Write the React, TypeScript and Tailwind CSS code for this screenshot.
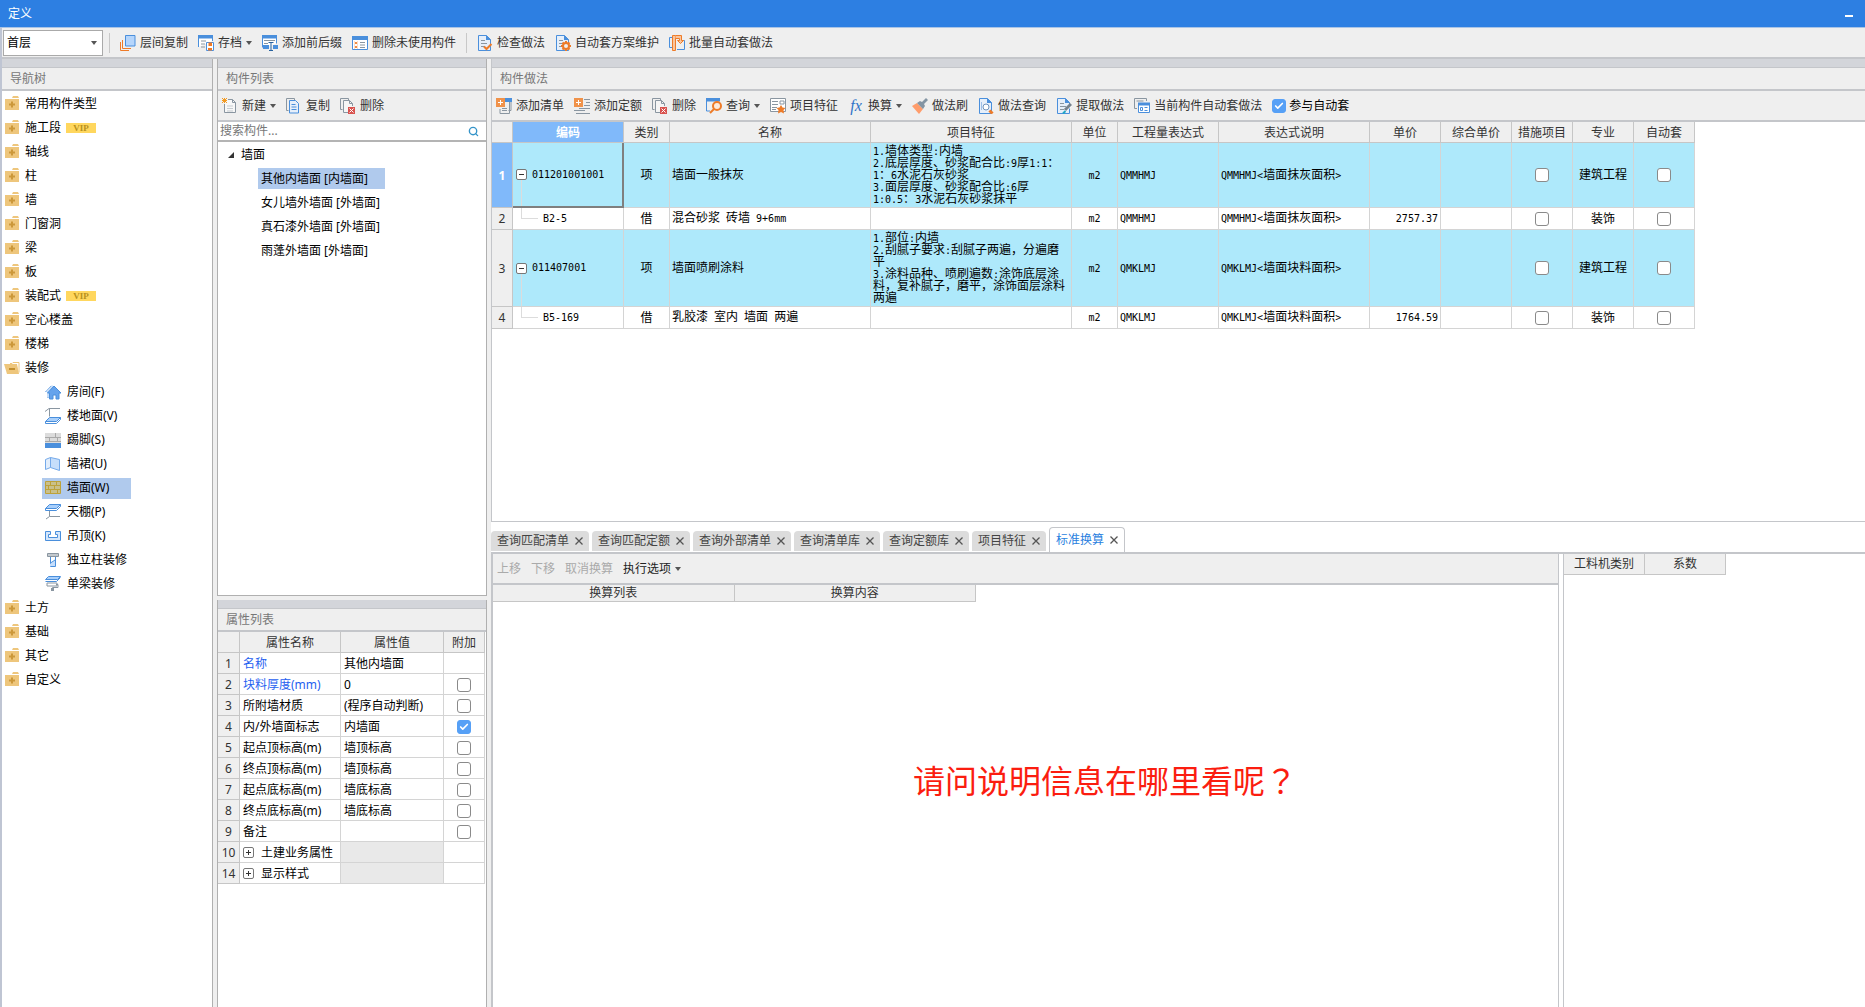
import type { ReactNode } from "react";
import { Check, Search } from "lucide-react";
import clsx from "clsx";

const ORANGE = "#ee7b28";
const BLUE = "#4a8fdc";
const GREY = "#8a96a1";

function Svg({ children }: { children: ReactNode }) {
  return (
    <svg viewBox="0 0 16 16" className="size-4 shrink-0" fill="none" aria-hidden="true">
      {children}
    </svg>
  );
}

const pageWithFold = (
  <>
    <path d="M1.500 .5h8l4 4v11h-12z" fill="#e6effa" stroke={BLUE} />
    <path d="M9 0l5 5H9z" fill={BLUE} />
    <path d="M4 5.500h4M4 8.500h6M4 11.500h4" stroke={GREY} />
  </>
);

const deleteIcon = (
  <>
    <path d="M8.500 2V.5h-8v11h2" stroke={GREY} />
    <path d="M8 14.500H3.500v-12h6l3 3V8" fill="#f5f5f5" stroke={GREY} />
    <path d="M9.500 2.500v3h3" stroke={GREY} />
    <path d="M8 9h7v7H8z" fill="#d9534f" />
    <path d="M9.500 10.500l4 4m0-4l-4 4" stroke="#fff" />
  </>
);

const plusBox = (
  <>
    <path d="M0 0h9v9H0z" fill="#f0924a" />
    <path d="M4.500 2v5M2 4.500h5" stroke="#fff" />
  </>
);

const icons = {
  layerCopy: (
    <Svg>
      <path d="M.5 7v8.500H9" stroke={ORANGE} />
      <path d="M2.500 5v8.500H11" stroke={ORANGE} />
      <path d="M5.500 .5h9.500v10.500H5.500z" fill="#b5d5fb" stroke={BLUE} />
    </Svg>
  ),
  archive: (
    <Svg>
      <path d="M.5 12V.5h14V6" fill="#fff" stroke={BLUE} />
      <path d="M0 0h15v3.500H0z" fill={BLUE} />
      <path d="M3 6h5M3 9h4M3 12h4" stroke={GREY} />
      <path d="M8.500 7.500h7v8h-7z" fill="#fff" stroke={BLUE} />
      <path d="M10.500 7.500h3.500V11h-3.500zM10 13h4v2.500h-4z" fill={ORANGE} />
    </Svg>
  ),
  affix: (
    <Svg>
      <path d="M.5 12.500V.5h14v8" fill="#fff" stroke={BLUE} />
      <path d="M0 0h15v3.500H0z" fill={BLUE} />
      <path d="M2 5.500h11M2 8.500h4" stroke={GREY} />
      <path d="M1 10h6v4H1zM11 10h5v4h-5z" fill={BLUE} />
      <path d="M6.500 7.500h5M9 7.500v8M7 15.500h4" stroke="#28629f" />
    </Svg>
  ),
  unused: (
    <Svg>
      <path d="M.5 1.500h15v13H.5z" fill="#fff" stroke={BLUE} />
      <path d="M0 1h16v4H0z" fill={BLUE} />
      <path d="M2.500 7l3 2m-3 0l3-2m-3 4l3 2m-3 0l3-2" stroke={ORANGE} />
      <path d="M8 7.500h5M8 10h5M8 12.500h5" stroke={GREY} />
    </Svg>
  ),
  check: (
    <Svg>
      {pageWithFold}
      <path d="M7 11.500l2.500 2.500 5-5" stroke={ORANGE} strokeWidth="2" />
    </Svg>
  ),
  scheme: (
    <Svg>
      {pageWithFold}
      <circle cx="11" cy="11" r="3" fill="#efefef" stroke={ORANGE} strokeWidth="2" />
      <path
        d="M11 6v2M11 14v2M6 11h2M14 11h2M7.500 7.500L9 9m4 4l1.500 1.500m0-7L13 9m-4 4l-1.500 1.500"
        stroke={ORANGE}
        strokeWidth="2"
      />
    </Svg>
  ),
  batch: (
    <Svg>
      <path d="M4 2.500H.5v10H4M13 5.500h2.500v9H8" stroke={BLUE} />
      <path d="M3.500 .5h3v15h-3z" fill="#f9c59d" stroke={ORANGE} />
      <path d="M6.500 .5h6v5h2L11.500 8.500 8.500 5.500h2v-2h-4" fill="#f9c59d" stroke={ORANGE} />
    </Svg>
  ),
  create: (
    <Svg>
      <path d="M6 1.500h4.500l3 3v10h-11V6" fill="#f8f8f8" stroke={GREY} />
      <path d="M10.500 1.500v3h3" stroke={GREY} />
      <path d="M5 8h6M5 10.500h6M5 13h6" stroke="#c5cbd0" />
      <path d="M0 0l5 5m0-5L0 5M2.500 0v5M0 2.500h5" stroke="#f39a21" />
    </Svg>
  ),
  copy: (
    <Svg>
      <path d="M2.500 12.500h-2v-12h8v2" stroke={GREY} />
      <path d="M3.500 2.500h6l3 3v9.500h-9z" fill="#e6effa" stroke={BLUE} />
      <path d="M5.500 6.500h4M5.500 9h5M5.500 11.500h5" stroke={BLUE} />
    </Svg>
  ),
  remove: <Svg>{deleteIcon}</Svg>,
  addList: (
    <Svg>
      <path d="M10 .5h5v12h-2.500M4 11v4.500h9.500V4" stroke={GREY} />
      <path d="M9 0h7v4H9z" fill={BLUE} />
      <path d="M6 10.500h5M6 12.500h5" stroke={GREY} />
      {plusBox}
    </Svg>
  ),
  addQuota: (
    <Svg>
      <path d="M10 1.500h6M12 4.500h4M10 7.500h6M5 10.500h11M0 12.500h11M2 15.500h14" stroke={GREY} />
      {plusBox}
    </Svg>
  ),
  query: (
    <Svg>
      <path d="M.5 2v11H4" stroke={BLUE} />
      <path d="M0 0h14v3.500H0z" fill={BLUE} />
      <circle cx="11" cy="8" r="4" fill="#fdeadb" stroke={ORANGE} strokeWidth="2" />
      <path d="M8 11l-4 4" stroke={ORANGE} strokeWidth="2" />
    </Svg>
  ),
  feature: (
    <Svg>
      <path d="M.5 .5h15v13H.5z" fill="#fff" stroke={GREY} />
      <path d="M2 3.500h6M2 6.500h6M2 9.500h5M2 11.500h4M10 3h4v3h-4z" stroke={GREY} />
      <path d="M11 7l1.500 2.500 3 .5-2 2 .5 3.500-3-1.500-3 1.500.5-3.500-2-2 3-.5z" fill={ORANGE} />
    </Svg>
  ),
  convert: (
    <span className="w-4 font-['Liberation_Serif',serif] text-base leading-4 text-[#2f74c8] italic" aria-hidden="true">
      fx
    </span>
  ),
  brush: (
    <Svg>
      <path d="M0 8l5-3 6 6-4 5z" fill="#ff9d6c" />
      <path d="M5 5l3-2 2 1 4-4 2 2-4 4 1 2-2 3z" fill="#8495a4" />
    </Svg>
  ),
  methodQuery: (
    <Svg>
      <path d="M1.500 .5h8l4 4v11h-12z" fill="#e6effa" stroke={BLUE} />
      <path d="M9 0l5 5H9z" fill={BLUE} />
      <circle cx="8" cy="9" r="3" fill="#fff" stroke="#6f93bd" />
      <path d="M3.500 4v8" stroke="#9dbfe8" />
      <path d="M11.500 12.500l3 3" stroke={ORANGE} strokeWidth="3" />
    </Svg>
  ),
  extract: (
    <Svg>
      {pageWithFold}
      <path d="M8 15l1-4 5-5 2 2-5 5z" fill="#fff" />
      <path d="M9 12l6-6" stroke="#76828d" strokeWidth="3" />
      <path d="M7 15.500l2.500-2.500" stroke="#22a7c4" strokeWidth="2" />
    </Svg>
  ),
  current: (
    <Svg>
      <path d="M3 10.500H.5V.5h12V3M2.500 3h7" stroke={GREY} />
      <path d="M4.500 5.500h11v9h-11z" fill="#fff" stroke={BLUE} />
      <path d="M4 4.500h12v3H4z" fill={BLUE} />
      <path d="M6.500 9.500h2v3h-2zM10.500 9.500h3M10.500 12.500h3" stroke={BLUE} />
    </Svg>
  ),
  folder: (
    <Svg>
      <path d="M8 2l1-2h5l1 2zM1 3h14v11H1z" fill="#eec67c" />
      <path d="M8 5.500v6M5 8.500h6" stroke="#cc983a" strokeWidth="2" />
    </Svg>
  ),
  folderOpen: (
    <Svg>
      <path d="M6 3.500h2l1-1h6v10" fill="#fff" stroke="#eec67c" />
      <path d="M0 4h13l2 10H3z" fill="#eec67c" />
      <path d="M5 9h6" stroke="#c28f2e" strokeWidth="2" />
    </Svg>
  ),
  room: (
    <Svg>
      <path d="M.5 8L6 2M3 14V7" stroke={BLUE} />
      <path d="M1 7l6-6 2 2-5 5v5H2V7z" fill="#c4dcf8" />
      <path d="M9 2l7 7h-2v6h-3v-4H8v4H4.500V9H2.500z" fill="#65a3ec" stroke={BLUE} />
    </Svg>
  ),
  floor: (
    <Svg>
      <path d="M0 3.500L4 .5h11M4.500 .5v8" stroke={GREY} />
      <path d="M4.500 9.500h11l-4 4H.5z" fill="#a8cffb" stroke={BLUE} />
      <path d="M.5 13.500v2h11l4-4v-2" stroke={BLUE} />
    </Svg>
  ),
  skirting: (
    <Svg>
      <path d="M0 1h16v10H0z" fill="#dcdcdc" />
      <path d="M0 5.500h16M0 9.500h16M10.500 1v4M4.500 5.500v4M12.500 5.500v4" stroke="#a9a9a9" />
      <path d="M0 11h16v5H0z" fill={BLUE} />
    </Svg>
  ),
  dado: (
    <Svg>
      <path d="M.5 3.500L5.500 1.500v10l-5 2z" fill="#e2eefc" stroke="#75aaea" />
      <path d="M5.500 1.500l9 2v11l-9-3z" fill="#c6defb" stroke="#75aaea" />
    </Svg>
  ),
  wall: (
    <Svg>
      <path d="M.5 1.500h15v12H.5z" fill="#c9c08c" stroke="#bda23a" />
      <path
        d="M0 5.500h16M0 9.500h16M5.500 1.500v4M11.500 1.500v4M3.500 5.500v4M9.500 5.500v4M5.500 9.500v4M12.500 9.500v4"
        stroke="#bda23a"
      />
    </Svg>
  ),
  ceiling: (
    <Svg>
      <path d="M4.500 .5h11l-4 4H.5z" fill="#a8cffb" stroke={BLUE} />
      <path d="M.5 4.500v2h11l4-4v-2" stroke={BLUE} />
      <path d="M4.500 7v5.500H15M4.500 12.500L1 15" stroke={GREY} />
    </Svg>
  ),
  suspended: (
    <Svg>
      <path d="M.5 3.500h5v3h-2v3h9v-3h-2v-3h5v9H.5z" fill="#d3e6fc" stroke={BLUE} />
    </Svg>
  ),
  column: (
    <Svg>
      <path d="M2.500 1.500h11v3h-11z" fill="#c3c9ce" stroke={GREY} />
      <path d="M5.500 5v9.500h5V5" fill="#fff" stroke={BLUE} />
      <path d="M5 12l5-4v6H5z" fill="#c6defb" />
      <path d="M5.500 11l4.500-3" stroke={BLUE} />
    </Svg>
  ),
  beam: (
    <Svg>
      <path d="M3.500 .5h12l-3 3H.5z" fill="#a8cffb" stroke={BLUE} />
      <path d="M.5 5.500h11l4-4" stroke={BLUE} />
      <path d="M2 7h10v3H2zM11 8.500h2v3H7.500V15" stroke={GREY} />
      <path d="M6 12h3v3H6z" fill={GREY} />
    </Svg>
  ),
};

type IconName = keyof typeof icons;

const NAV: { label: string; icon?: IconName; vip?: boolean; child?: boolean; active?: boolean }[] = [
  { label: "常用构件类型" },
  { label: "施工段", vip: true },
  { label: "轴线" },
  { label: "柱" },
  { label: "墙" },
  { label: "门窗洞" },
  { label: "梁" },
  { label: "板" },
  { label: "装配式", vip: true },
  { label: "空心楼盖" },
  { label: "楼梯" },
  { label: "装修", icon: "folderOpen" },
  { label: "房间(F)", icon: "room", child: true },
  { label: "楼地面(V)", icon: "floor", child: true },
  { label: "踢脚(S)", icon: "skirting", child: true },
  { label: "墙裙(U)", icon: "dado", child: true },
  { label: "墙面(W)", icon: "wall", child: true, active: true },
  { label: "天棚(P)", icon: "ceiling", child: true },
  { label: "吊顶(K)", icon: "suspended", child: true },
  { label: "独立柱装修", icon: "column", child: true },
  { label: "单梁装修", icon: "beam", child: true },
  { label: "土方" },
  { label: "基础" },
  { label: "其它" },
  { label: "自定义" },
];

const COMPONENTS = [
  "其他内墙面 [内墙面]",
  "女儿墙外墙面 [外墙面]",
  "真石漆外墙面 [外墙面]",
  "雨蓬外墙面 [外墙面]",
];

const PROPS: { no: number; name: string; value?: string; check?: boolean; blue?: boolean; group?: boolean }[] = [
  { no: 1, name: "名称", value: "其他内墙面", blue: true },
  { no: 2, name: "块料厚度(mm)", value: "0", check: false, blue: true },
  { no: 3, name: "所附墙材质", value: "(程序自动判断)", check: false },
  { no: 4, name: "内/外墙面标志", value: "内墙面", check: true },
  { no: 5, name: "起点顶标高(m)", value: "墙顶标高", check: false },
  { no: 6, name: "终点顶标高(m)", value: "墙顶标高", check: false },
  { no: 7, name: "起点底标高(m)", value: "墙底标高", check: false },
  { no: 8, name: "终点底标高(m)", value: "墙底标高", check: false },
  { no: 9, name: "备注", check: false },
  { no: 10, name: "土建业务属性", group: true },
  { no: 14, name: "显示样式", group: true },
];

const COLUMNS = [
  { label: "编码", width: "w-[111px]" },
  { label: "类别", width: "w-[46px]" },
  { label: "名称", width: "w-[201px]" },
  { label: "项目特征", width: "w-[201px]" },
  { label: "单位", width: "w-[46px]" },
  { label: "工程量表达式", width: "w-[101px]" },
  { label: "表达式说明", width: "w-[151px]" },
  { label: "单价", width: "w-[71px]" },
  { label: "综合单价", width: "w-[71px]" },
  { label: "措施项目", width: "w-[61px]" },
  { label: "专业", width: "w-[61px]" },
  { label: "自动套", width: "w-[61px]" },
];

const ROWS = [
  {
    code: "011201001001",
    kind: "项",
    name: "墙面一般抹灰",
    features: [
      "1.墙体类型:内墙",
      "2.底层厚度、砂浆配合比:9厚1:1：",
      "1：6水泥石灰砂浆",
      "3.面层厚度、砂浆配合比:6厚",
      "1:0.5：3水泥石灰砂浆抹平",
    ],
    expr: "QMMHMJ",
    desc: "QMMHMJ<墙面抹灰面积>",
    price: "",
    major: "建筑工程",
    height: "h-[65px]",
  },
  {
    code: "B2-5",
    kind: "借",
    name: "混合砂浆 砖墙 9+6mm",
    features: [],
    expr: "QMMHMJ",
    desc: "QMMHMJ<墙面抹灰面积>",
    price: "2757.37",
    major: "装饰",
    height: "h-[22px]",
  },
  {
    code: "011407001",
    kind: "项",
    name: "墙面喷刷涂料",
    features: [
      "1.部位:内墙",
      "2.刮腻子要求:刮腻子两遍，分遍磨",
      "平",
      "3.涂料品种、喷刷遍数:涂饰底层涂",
      "料，复补腻子，磨平，涂饰面层涂料",
      "两遍",
    ],
    expr: "QMKLMJ",
    desc: "QMKLMJ<墙面块料面积>",
    price: "",
    major: "建筑工程",
    height: "h-[77px]",
  },
  {
    code: "B5-169",
    kind: "借",
    name: "乳胶漆 室内 墙面 两遍",
    features: [],
    expr: "QMKLMJ",
    desc: "QMKLMJ<墙面块料面积>",
    price: "1764.59",
    major: "装饰",
    height: "h-[22px]",
  },
];

const TABS = ["查询匹配清单", "查询匹配定额", "查询外部清单", "查询清单库", "查询定额库", "项目特征", "标准换算"];

// Half-width characters take half the width of a Chinese one in grid cells.
function Mixed({ text }: { text: string }) {
  return (
    <>
      {text.split(/([\x20-\x7e]+)/).map((run, i) =>
        i % 2 ? (
          <span key={i} className="font-['DejaVu_Sans_Mono',monospace] text-[10px] whitespace-pre">
            {run}
          </span>
        ) : (
          run
        ),
      )}
    </>
  );
}

function Caret() {
  return (
    <svg viewBox="0 0 6 4" className="h-1 w-1.5 shrink-0" aria-hidden="true">
      <path d="M0 0h6L3 4z" fill="#555" />
    </svg>
  );
}

function Tool({ icon, label, menu }: { icon: IconName; label: string; menu?: boolean }) {
  return (
    <button type="button" className="flex shrink-0 items-center gap-1 whitespace-nowrap text-[#333]">
      {icons[icon]}
      {label}
      {menu && <Caret />}
    </button>
  );
}

function Tick({ label, checked = false }: { label: string; checked?: boolean }) {
  return (
    <span className="inline-grid place-items-center align-middle">
      <input
        type="checkbox"
        aria-label={label}
        defaultChecked={checked}
        className="peer col-start-1 row-start-1 size-3.5 appearance-none rounded-[3px] border border-[#8a8a8a] bg-white checked:border-[#56a0f6] checked:bg-[#56a0f6]"
      />
      <Check
        className="pointer-events-none col-start-1 row-start-1 hidden size-2.5 text-white peer-checked:block"
        strokeWidth={4}
      />
    </span>
  );
}

function PanelHead({ title }: { title: string }) {
  return (
    <>
      <div className="h-2 shrink-0 bg-[#d3d5da]" />
      <h2 className="h-6 shrink-0 border-t border-b-2 border-[#c4c6ca] px-2 leading-[22px] text-[#777]">{title}</h2>
    </>
  );
}

function Expander({ open }: { open?: boolean }) {
  return (
    <svg viewBox="0 0 11 11" className="size-[11px] shrink-0" fill="none" aria-hidden="true">
      <rect x=".5" y=".5" width="10" height="10" rx="1.500" fill="#fff" stroke="#777" />
      <path d={open ? "M3 5.500h5" : "M3 5.500h5M5.500 3v5"} stroke="#333" />
    </svg>
  );
}

function NavTree() {
  return (
    <aside className="flex w-[211px] shrink-0 flex-col border-r border-[#b0b0b0]">
      <PanelHead title="导航树" />
      <ul className="flex-1 bg-white pt-px">
        {NAV.map((item) => (
          <li key={item.label} className={clsx("flex h-6 items-center", item.child ? "pl-10" : "pl-0.5")}>
            <a
              href="#"
              className={clsx(
                "flex h-[21px] items-center",
                item.child ? "gap-1.5 pl-[3px]" : "gap-[5px]",
                item.active && "w-[89px] bg-[#b0caed]",
              )}
            >
              {icons[item.icon ?? "folder"]}
              {item.label}
              {item.vip && (
                <span className="h-2.5 w-[30px] bg-[#ffd75e] text-center font-['Liberation_Serif',serif] text-[9px] leading-[10px] font-bold text-[#b8901c]">
                  VIP
                </span>
              )}
            </a>
          </li>
        ))}
      </ul>
    </aside>
  );
}

function ComponentList() {
  return (
    <section className="flex flex-[536] flex-col border border-t-0 border-[#b0b0b0]">
      <PanelHead title="构件列表" />
      <div className="flex h-[31px] shrink-0 items-center gap-2.5 border-b-2 border-[#c4c6ca] pt-px pl-1">
        <Tool icon="create" label="新建" menu />
        <Tool icon="copy" label="复制" />
        <Tool icon="remove" label="删除" />
      </div>
      <label className="flex h-5 shrink-0 items-center border-b-2 border-[#b4b4b4] bg-white pr-[7px] pl-0.5">
        <input
          type="text"
          aria-label="搜索构件"
          placeholder="搜索构件..."
          className="min-w-0 flex-1 outline-none placeholder:text-[#777]"
        />
        <Search className="size-[11px] text-[#3594c9]" strokeWidth={3} />
      </label>
      <ul className="flex-1 bg-white">
        <li className="flex h-6 items-center gap-[7px] pt-px pl-2.5">
          <svg viewBox="0 0 6 6" className="size-1.5" aria-hidden="true">
            <path d="M6 0v6H0z" fill="#333" />
          </svg>
          墙面
        </li>
        {COMPONENTS.map((name, i) => (
          <li key={name} className="flex h-6 items-center pl-10">
            <a href="#" className={clsx("h-[21px] pl-[3px] leading-[21px]", i === 0 && "w-[127px] bg-[#b0caed]")}>
              {name}
            </a>
          </li>
        ))}
      </ul>
    </section>
  );
}

function PropertyList() {
  const head = "border-r border-b border-[#c6c6c6] bg-[#efefef] px-0 pt-px pb-0 font-normal text-[#333]";
  const cell = "border-r border-b border-[#d4d4d4] px-[3px] pt-px pb-0";
  return (
    <section className="flex flex-[407] flex-col border-x border-[#b0b0b0]">
      <PanelHead title="属性列表" />
      <div className="flex-1 bg-white">
        <table className="w-[267px] table-fixed border-separate border-spacing-0">
          <thead>
            <tr className="h-[21px]">
              <th className={clsx(head, "w-[22px]")} />
              <th className={clsx(head, "w-[101px]")}>属性名称</th>
              <th className={clsx(head, "w-[103px]")}>属性值</th>
              <th className={clsx(head, "w-[41px]")}>附加</th>
            </tr>
          </thead>
          <tbody>
            {PROPS.map((p) => (
              <tr key={p.no} className="h-[21px]">
                <th className={head}>{p.no}</th>
                <td className={clsx(cell, p.blue && "text-[#1f5ff0]")}>
                  {p.group ? (
                    <span className="flex items-center gap-[7px]">
                      <Expander />
                      {p.name}
                    </span>
                  ) : (
                    p.name
                  )}
                </td>
                <td className={clsx(cell, p.group && "bg-[#e9e9e9]")}>{p.value}</td>
                <td className={clsx(cell, "text-center leading-none")}>
                  {p.check !== undefined && <Tick label={p.name} checked={p.check} />}
                </td>
              </tr>
            ))}
          </tbody>
        </table>
      </div>
    </section>
  );
}

function MethodTable() {
  const head = "border-r border-b border-[#c6c6c6] px-0 pt-px pb-0";
  const plain = "bg-[#efefef] font-normal text-[#333]";
  const current = "bg-[#80b9fa] font-bold text-white";
  return (
    <table className="w-[1203px] table-fixed border-separate border-spacing-0">
      <thead>
        <tr className="h-[21px]">
          <th className={clsx(head, plain, "w-[21px]")} />
          {COLUMNS.map((col, i) => (
            <th key={col.label} className={clsx(head, col.width, i === 0 ? current : plain)}>
              {col.label}
            </th>
          ))}
        </tr>
      </thead>
      <tbody className="leading-3">
        {ROWS.map((row, i) => {
          const parent = i % 2 === 0;
          const cell = clsx("border-r border-b border-[#d4d4d4] px-0.5 py-0", parent && "bg-[#aee9fb]");
          return (
            <tr key={row.code} className={row.height}>
              <th className={clsx(head, i === 0 ? current : plain)}>{i + 1}</th>
              <td
                className={clsx(
                  "relative py-0",
                  parent ? "bg-[#aee9fb] pl-[3px]" : "pl-[30px]",
                  i === 0 ? "border-r-2 border-b-2 border-[#7f7f7f]" : "border-r border-b border-[#d4d4d4]",
                )}
              >
                <span
                  className={clsx(
                    "absolute left-2 border-[#dcdcdc]",
                    parent ? "top-1/2 bottom-0 border-l" : "top-0 h-1/2 w-[17px] border-b border-l",
                  )}
                />
                <span className="relative flex items-center gap-[5px]">
                  {parent && <Expander open />}
                  <Mixed text={row.code} />
                </span>
              </td>
              <td className={clsx(cell, "text-center")}>{row.kind}</td>
              <td className={cell}>
                <Mixed text={row.name} />
              </td>
              <td className={clsx(cell, "whitespace-nowrap")}>
                {row.features.map((line) => (
                  <div key={line} className="h-3">
                    <Mixed text={line} />
                  </div>
                ))}
              </td>
              <td className={clsx(cell, "text-center")}>
                <Mixed text="m2" />
              </td>
              <td className={cell}>
                <Mixed text={row.expr} />
              </td>
              <td className={cell}>
                <Mixed text={row.desc} />
              </td>
              <td className={clsx(cell, "text-right")}>
                <Mixed text={row.price} />
              </td>
              <td className={cell} />
              <td className={clsx(cell, "text-center")}>
                <Tick label="措施项目" />
              </td>
              <td className={clsx(cell, "text-center")}>{row.major}</td>
              <td className={clsx(cell, "text-center")}>
                <Tick label="自动套" />
              </td>
            </tr>
          );
        })}
      </tbody>
    </table>
  );
}

function ConversionPane() {
  const th = "border-r border-b border-[#c6c6c6] bg-[#efefef] p-0 font-normal text-[#333]";
  return (
    <div className="flex min-h-0 flex-1 gap-1">
      <section className="flex min-w-0 flex-1 flex-col border-r border-l-2 border-[#c4c6ca]">
        <div className="flex h-[31px] shrink-0 items-center gap-2.5 border-b-2 border-[#c4c6ca] bg-[#efefef] pt-px pl-1">
          <button type="button" disabled className="text-[#aaa]">
            上移
          </button>
          <button type="button" disabled className="text-[#aaa]">
            下移
          </button>
          <button type="button" disabled className="text-[#aaa]">
            取消换算
          </button>
          <button type="button" className="flex items-center gap-1 text-[#222]">
            执行选项
            <Caret />
          </button>
        </div>
        <table className="w-[483px] table-fixed border-separate border-spacing-0">
          <thead>
            <tr className="h-[17px] leading-4">
              <th className={th}>换算列表</th>
              <th className={th}>换算内容</th>
            </tr>
          </thead>
        </table>
        <p className="mt-[153px] ml-[420px] text-[32px] leading-12 whitespace-nowrap text-[#fb1d10]">
          请问说明信息在哪里看呢
          <span className="font-['Noto_Sans_CJK_TC',sans-serif]">？</span>
        </p>
      </section>
      <section className="w-[302px] shrink-0 border-l border-[#c4c6ca]">
        <table className="w-[162px] table-fixed border-separate border-spacing-0">
          <thead>
            <tr className="h-[21px]">
              <th className={th}>工料机类别</th>
              <th className={th}>系数</th>
            </tr>
          </thead>
        </table>
      </section>
    </div>
  );
}

export default function App() {
  return (
    <div className="flex h-screen flex-col overflow-hidden bg-[#efefef] font-['Noto_Sans','Noto_Sans_CJK_SC',sans-serif] text-xs text-black">
      <header className="flex h-7 shrink-0 items-center justify-between border-b border-[#a9c4e6] bg-[#2d7fe2] px-2 text-white">
        <h1>定义</h1>
        <button type="button" aria-label="最小化" className="flex h-5 w-4 items-center justify-center pt-1">
          <span className="h-0.5 w-2 bg-white" />
        </button>
      </header>

      <div className="flex min-h-0 flex-1 flex-col border-l-2 border-[#bfc5d3]">
        <div className="flex h-[31px] shrink-0 items-center gap-2.5 border-b-2 border-[#c4c6ca] pl-px">
          <div className="mr-[-4px] grid items-center">
            <select
              aria-label="楼层"
              className="col-start-1 row-start-1 h-[26px] w-[100px] appearance-none border border-[#aaa] bg-white px-[3px]"
            >
              <option>首层</option>
            </select>
            <span className="pointer-events-none col-start-1 row-start-1 justify-self-end pr-1.5">
              <Caret />
            </span>
          </div>
          <span className="h-5 w-px bg-[#c8c8c8]" />
          <Tool icon="layerCopy" label="层间复制" />
          <Tool icon="archive" label="存档" menu />
          <Tool icon="affix" label="添加前后缀" />
          <Tool icon="unused" label="删除未使用构件" />
          <span className="h-5 w-px bg-[#c8c8c8]" />
          <Tool icon="check" label="检查做法" />
          <Tool icon="scheme" label="自动套方案维护" />
          <Tool icon="batch" label="批量自动套做法" />
        </div>

        <div className="flex min-h-0 flex-1 gap-1">
          <NavTree />
          <div className="flex w-[270px] shrink-0 flex-col gap-1">
            <ComponentList />
            <PropertyList />
          </div>

          <main className="flex min-w-0 flex-1 flex-col">
            <section className="flex min-h-0 flex-[462] flex-col border-b border-l border-[#c4c6ca]">
              <PanelHead title="构件做法" />
              <div className="flex h-[31px] shrink-0 items-center gap-2.5 border-b-2 border-[#c4c6ca] pt-px pl-1">
                <Tool icon="addList" label="添加清单" />
                <Tool icon="addQuota" label="添加定额" />
                <Tool icon="remove" label="删除" />
                <Tool icon="query" label="查询" menu />
                <Tool icon="feature" label="项目特征" />
                <Tool icon="convert" label="换算" menu />
                <Tool icon="brush" label="做法刷" />
                <Tool icon="methodQuery" label="做法查询" />
                <Tool icon="extract" label="提取做法" />
                <Tool icon="current" label="当前构件自动套做法" />
                <label className="flex items-center gap-[3px]">
                  <Tick label="参与自动套" checked />
                  参与自动套
                </label>
              </div>
              <div className="flex-1 bg-white">
                <MethodTable />
              </div>
            </section>

            <section className="flex min-h-0 flex-[486] flex-col bg-white">
              <div role="tablist" className="flex h-8 shrink-0 items-end gap-[3px] border-b-2 border-[#c4c6ca]">
                {TABS.map((tab, i) => {
                  const active = i === TABS.length - 1;
                  return (
                    <button
                      key={tab}
                      type="button"
                      role="tab"
                      aria-selected={active}
                      className={clsx(
                        "flex items-center gap-1.5 rounded-t px-1.5 whitespace-nowrap",
                        active
                          ? "h-[25px] border border-b-0 border-[#c4c6ca] bg-white text-[#2a7fe0]"
                          : "mb-px h-5 bg-[#dcdcdc] text-[#444]",
                      )}
                    >
                      {tab}
                      <svg viewBox="0 0 8 8" className="size-2" fill="none" aria-hidden="true">
                        <path d="M.5 .5l7 7m0-7l-7 7" stroke="#555" strokeWidth="1.300" />
                      </svg>
                    </button>
                  );
                })}
              </div>
              <ConversionPane />
            </section>
          </main>
        </div>
      </div>
    </div>
  );
}
